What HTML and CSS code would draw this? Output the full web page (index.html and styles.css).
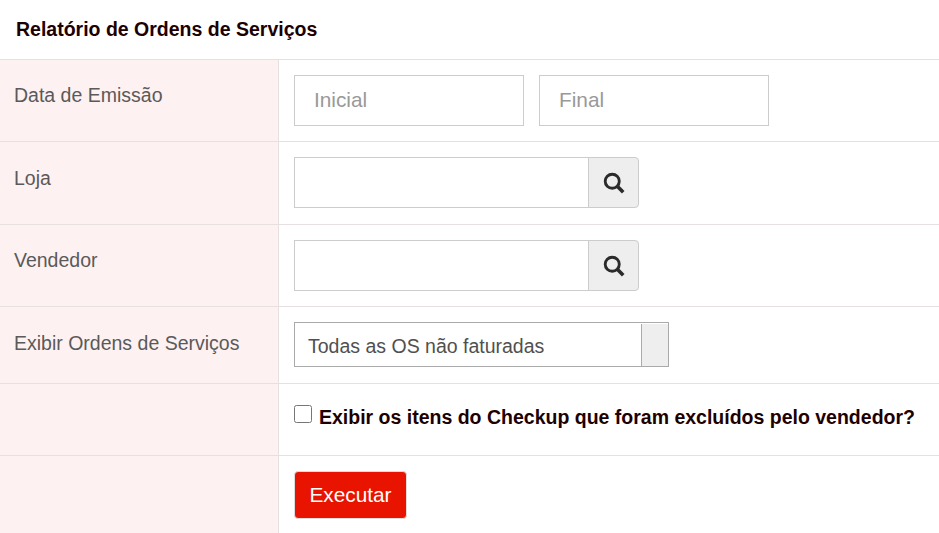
FILE: index.html
```html
<!DOCTYPE html>
<html lang="pt-BR">
<head>
<meta charset="utf-8">
<title>Relatório de Ordens de Serviços</title>
<link rel="stylesheet" href="styles.css">
</head>
<body>
<h1 class="title">Relatório de Ordens de Serviços</h1>
<div class="row row-a">
  <div class="label">Data de Emissão</div>
  <div class="field">
    <input class="text date" type="text" placeholder="Inicial">
    <input class="text date" type="text" placeholder="Final">
  </div>
</div>
<div class="row row-b">
  <div class="label label-b">Loja</div>
  <div class="field">
    <div class="group">
      <input class="text lookup" type="text">
      <button class="addon" type="button" aria-label="Buscar">
        <svg width="22" height="22" viewBox="0 0 20 20" aria-hidden="true"><circle cx="8.4" cy="8.4" r="6.4" fill="none" stroke="#2b2b2b" stroke-width="2.6"/><path d="M13 13 18.4 18.4" stroke="#2b2b2b" stroke-width="3.3" fill="none"/></svg>
      </button>
    </div>
  </div>
</div>
<div class="row row-a">
  <div class="label">Vendedor</div>
  <div class="field">
    <div class="group">
      <input class="text lookup" type="text">
      <button class="addon" type="button" aria-label="Buscar">
        <svg width="22" height="22" viewBox="0 0 20 20" aria-hidden="true"><circle cx="8.4" cy="8.4" r="6.4" fill="none" stroke="#2b2b2b" stroke-width="2.6"/><path d="M13 13 18.4 18.4" stroke="#2b2b2b" stroke-width="3.3" fill="none"/></svg>
      </button>
    </div>
  </div>
</div>
<div class="row row-c">
  <div class="label label-c">Exibir Ordens de Serviços</div>
  <div class="field">
    <div class="select">
      <span class="select-value">Todas as OS não faturadas</span>
      <span class="select-arrow"></span>
    </div>
  </div>
</div>
<div class="row row-d">
  <div class="label"></div>
  <div class="field field-check">
    <input class="check" type="checkbox" id="excluidos">
    <label class="check-label" for="excluidos">Exibir os itens do Checkup que foram excluídos pelo vendedor?</label>
  </div>
</div>
<div class="row row-e">
  <div class="label"></div>
  <div class="field">
    <button class="run" type="button">Executar</button>
  </div>
</div>
</body>
</html>
```
FILE: styles.css
```css
* { box-sizing: border-box; }
html, body { margin: 0; padding: 0; height: 100%; overflow: hidden; }
body { background: #fff; font-family: "Liberation Sans", Arial, sans-serif; color: #555; }
.title {
  margin: 0;
  height: 59px;
  padding: 19px 16px 0;
  font-size: 19.5px;
  line-height: 21px;
  font-weight: 700;
  color: #1d0000;
}
.row { display: flex; border-top: 1px solid #e8e0e0; }
.row-a { height: 82px; }
.row-b { height: 83px; }
.row-c { height: 77px; }
.row-d { height: 72px; }
.row-e { height: 78px; }
.label {
  flex: 0 0 279px;
  padding: 24px 14px 0;
  background: #fef1f1;
  border-right: 1px solid #e6e0e0;
  font-size: 19.5px;
  line-height: 22px;
  color: #5a5a5a;
}
.label-b { padding-top: 25px; }
.label-c { padding-top: 25px; }
.field { flex: 1; display: flex; gap: 15px; padding: 15px 0 0 15px; align-items: flex-start; }
.text {
  height: 51px;
  border: 1px solid #ccc;
  background: #fff;
  padding: 0 19px 2px;
  font-family: inherit;
  font-size: 20.8px;
  color: #555;
  border-radius: 0;
  outline: 0;
}
.text::placeholder { color: #999; opacity: 1; }
.date { width: 230px; }
.group { display: flex; }
.lookup { width: 295px; }
.addon {
  width: 51px;
  height: 51px;
  margin-left: -1px;
  padding: 0;
  display: flex;
  align-items: center;
  justify-content: center;
  background: #eee;
  border: 1px solid #ccc;
  border-radius: 0 4px 4px 0;
}
.select {
  width: 375px;
  height: 45px;
  display: flex;
  border: 1px solid #aaa;
  background: #fff;
}
.select-value { flex: 1; padding-left: 13px; font-size: 19.5px; line-height: 46px; color: #505050; }
.select-arrow { width: 27px; margin-top: 1px; background: #eee; border-left: 1px solid #aaa; }
.field-check { gap: 7px; padding-top: 21px; }
.check { width: 18px; height: 18px; margin: 0; flex: none; }
.check-label { font-size: 19.5px; line-height: 24px; font-weight: 700; color: #1d0000; white-space: nowrap; }
.run {
  width: 113px;
  height: 48px;
  padding: 0;
  background: #e81400;
  border: 1px solid #ddd;
  border-radius: 4px;
  color: #fff;
  font-family: inherit;
  font-size: 20.8px;
}
```
